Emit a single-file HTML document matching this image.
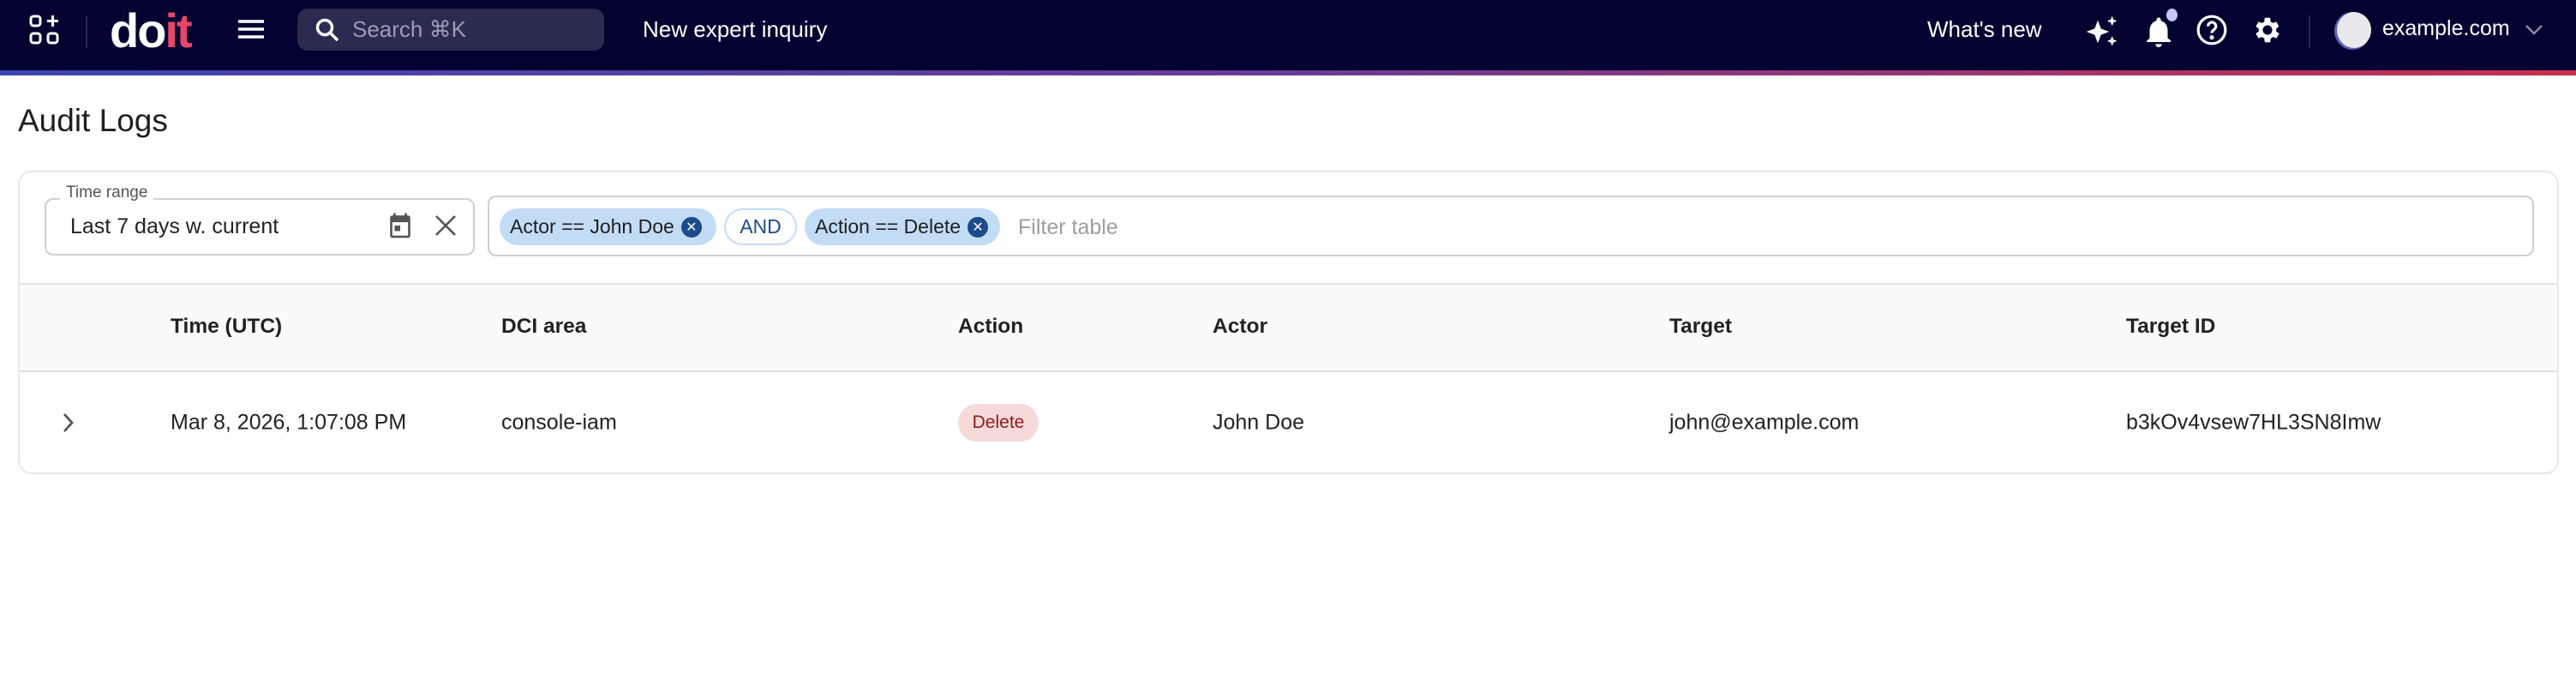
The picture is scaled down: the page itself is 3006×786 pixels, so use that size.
<!DOCTYPE html>
<html><head><meta charset="utf-8"><style>
*{box-sizing:border-box;margin:0;padding:0}
body{width:3006px;height:786px;background:#fff;font-family:"Liberation Sans",sans-serif;position:relative;overflow:hidden;color:#1f1f1f}
.a{position:absolute;white-space:nowrap}
.nav{left:0;top:0;width:3006px;height:82px;background:#020330}
.grad{left:0;top:82px;width:3006px;height:6px;background:linear-gradient(90deg,#3d45b0,#6a3c95 50%,#c8304f)}
.w{color:#fff;font-size:26px}
.vc{display:flex;align-items:center}
.hdr{font-size:24.5px;font-weight:bold;color:#222;top:381px;transform:translateY(-50%)}
.cell{font-size:25px;color:#222;top:493px;transform:translateY(-50%)}
.chip{height:43px;top:243px;border-radius:22px;font-size:23px;display:flex;align-items:center;padding:0 12px;white-space:nowrap}
.x{width:24px;height:24px;border-radius:50%;background:#1d4c8c;color:#fff;font-size:16px;display:flex;align-items:center;justify-content:center;margin-left:8px;flex:none}
</style></head><body>
<div class="a nav"></div>
<div class="a grad"></div>
<svg class="a" style="left:33px;top:16px" width="38" height="38" viewBox="0 0 38 38" fill="none" stroke="#fff" stroke-width="3"><rect x="3" y="3" width="11" height="11" rx="3"/><rect x="3" y="23" width="11" height="11" rx="3"/><rect x="23" y="23" width="11" height="11" rx="3"/><path d="M28.5 2v13M22 8.5h13"/></svg>
<div class="a" style="left:100px;top:18px;width:2px;height:38px;background:#2a2b50"></div>
<div class="a" style="left:128px;top:4px;font-size:56px;font-weight:bold;letter-spacing:-2px;line-height:64px"><span style="color:#fff">do</span><span style="color:#e8456a">it</span></div>
<svg class="a" style="left:278px;top:22px" width="30" height="24" viewBox="0 0 30 24" stroke="#fff" stroke-width="3.5"><path d="M0 3h30M0 12h30M0 21h30"/></svg>
<div class="a vc" style="left:347px;top:10px;width:358px;height:49px;background:#2a2b50;border-radius:12px;padding-left:20px">
<svg width="30" height="30" viewBox="0 0 30 30" fill="none" stroke="#fff" stroke-width="3.5"><circle cx="12" cy="12" r="8.5"/><path d="M18 18l9 9"/></svg>
<span style="color:#9a9bb5;font-size:26px;margin-left:14px">Search ⌘K</span></div>
<div class="a w" style="left:750px;top:19px">New expert inquiry</div>
<div class="a w" style="left:2249px;top:19px">What's new</div>
<svg class="a" style="left:2433px;top:17px" width="40" height="40" viewBox="0 0 24 24" fill="#fff"><path d="M9 4l2.2 5.8L17 12l-5.8 2.2L9 20l-2.2-5.8L1 12l5.8-2.2z"/><path d="M19 1l1 2.5 2.5 1-2.5 1-1 2.5-1-2.5-2.5-1 2.5-1zM19 15l1 2.5 2.5 1-2.5 1-1 2.5-1-2.5-2.5-1 2.5-1z"/></svg>
<svg class="a" style="left:2501px;top:17px" width="36" height="40" viewBox="0 0 24 26" fill="#fff"><path d="M12 25c1.4 0 2.4-1 2.4-2.4H9.6C9.6 24 10.6 25 12 25zM19 18v-6c0-3.7-2-6.7-5.3-7.5V3.7a1.7 1.7 0 00-3.4 0v.8C7 5.3 5 8.3 5 12v6l-2.4 2.4V21h18.8v-1.2z"/></svg>
<div class="a" style="left:2528px;top:10px;width:13px;height:15px;border-radius:50%;background:#c5c8f5"></div>
<svg class="a" style="left:2562px;top:16px" width="38" height="38" viewBox="0 0 24 24" fill="none" stroke="#fff" stroke-width="2"><circle cx="12" cy="12" r="10"/><path d="M9.2 9.2a2.9 2.9 0 115 2c-1 .9-2.2 1.4-2.2 3" /><circle cx="12" cy="17.5" r=".6" fill="#fff"/></svg>
<svg class="a" style="left:2627px;top:16px" width="38" height="38" viewBox="0 0 24 24" fill="#fff"><path d="M19.4 13a7.6 7.6 0 000-2l2.1-1.6-2-3.5-2.5 1a7.4 7.4 0 00-1.7-1L15 3h-4l-.4 2.9a7.4 7.4 0 00-1.7 1l-2.5-1-2 3.5L6.6 11a7.6 7.6 0 000 2l-2.2 1.6 2 3.5 2.5-1a7.4 7.4 0 001.7 1L11 21h4l.4-2.9a7.4 7.4 0 001.7-1l2.5 1 2-3.5zM13 15.5a3.5 3.5 0 110-7 3.5 3.5 0 010 7z" transform="translate(-1 0)"/></svg>
<div class="a" style="left:2694px;top:18px;width:2px;height:38px;background:#2a2b50"></div>
<div class="a" style="left:2724px;top:14px;width:42px;height:44px;border-radius:50%;background:#5d63b8"></div>
<div class="a" style="left:2727px;top:14px;width:40px;height:42px;border-radius:50%;background:#e9e9ec"></div>
<div class="a w" style="left:2780px;top:19px;font-size:25px">example.com</div>
<svg class="a" style="left:2946px;top:28px" width="22" height="14" viewBox="0 0 22 14" fill="none" stroke="#8a8ba5" stroke-width="2.5"><path d="M2 2l9 9 9-9"/></svg>

<div class="a" style="left:21px;top:120px;font-size:37px;color:#1f1f1f">Audit Logs</div>
<div class="a" style="left:21px;top:199px;width:2965px;height:354px;border:2px solid #e8e8e8;border-radius:16px;overflow:hidden">
 <div class="a" style="left:0;top:129px;width:100%;height:104px;background:#fafafa;border-top:2px solid #e4e4e4;border-bottom:2px solid #e0e0e0"></div>
</div>
<div class="a" style="left:52px;top:231px;width:502px;height:67px;border:2px solid #cfcfcf;border-radius:10px"></div>
<div class="a" style="left:70px;top:214px;background:#fff;padding:0 7px;font-size:19px;color:#555">Time range</div>
<div class="a" style="left:82px;top:250px;font-size:25px;color:#222">Last 7 days w. current</div>
<svg class="a" style="left:451px;top:246px" width="32" height="34" viewBox="0 0 24 26" fill="#555"><path d="M19 4h-1V2h-2v2H8V2H6v2H5a2 2 0 00-2 2v16a2 2 0 002 2h14a2 2 0 002-2V6a2 2 0 00-2-2zm0 18H5V10h14zM7 13h5v5H7z"/></svg>
<svg class="a" style="left:506px;top:249px" width="28" height="28" viewBox="0 0 28 28" stroke="#555" stroke-width="2.6"><path d="M3 3l22 22M25 3L3 25"/></svg>
<div class="a" style="left:569px;top:228px;width:2388px;height:71px;border:2px solid #cfcfcf;border-radius:10px"></div>
<div class="a chip" style="left:583px;width:253px;background:#c3dcf5;color:#1f1f1f">Actor == John Doe<span class="x">✕</span></div>
<div class="a chip" style="left:845px;width:85px;border:2px solid #c3dcf5;color:#1d4c8c;justify-content:center">AND</div>
<div class="a chip" style="left:939px;width:228px;background:#c3dcf5;color:#1f1f1f">Action == Delete<span class="x">✕</span></div>
<div class="a" style="left:1188px;top:251px;font-size:25px;color:#9e9e9e">Filter table</div>
<div class="a hdr" style="left:199px">Time (UTC)</div>
<div class="a hdr" style="left:585px">DCI area</div>
<div class="a hdr" style="left:1118px">Action</div>
<div class="a hdr" style="left:1415px">Actor</div>
<div class="a hdr" style="left:1948px">Target</div>
<div class="a hdr" style="left:2481px">Target ID</div>
<svg class="a" style="left:72px;top:481px" width="16" height="24" viewBox="0 0 16 24" fill="none" stroke="#555" stroke-width="2.8"><path d="M3 2l9 10-9 10"/></svg>
<div class="a cell" style="left:199px">Mar 8, 2026, 1:07:08 PM</div>
<div class="a cell" style="left:585px">console-iam</div>
<div class="a" style="left:1118px;top:471px;width:94px;height:44px;border-radius:22px;background:#f6d9d9;color:#8e1b1b;font-size:21px;display:flex;align-items:center;justify-content:center">Delete</div>
<div class="a cell" style="left:1415px">John Doe</div>
<div class="a cell" style="left:1948px">john@example.com</div>
<div class="a cell" style="left:2481px">b3kOv4vsew7HL3SN8Imw</div>
</body></html>
